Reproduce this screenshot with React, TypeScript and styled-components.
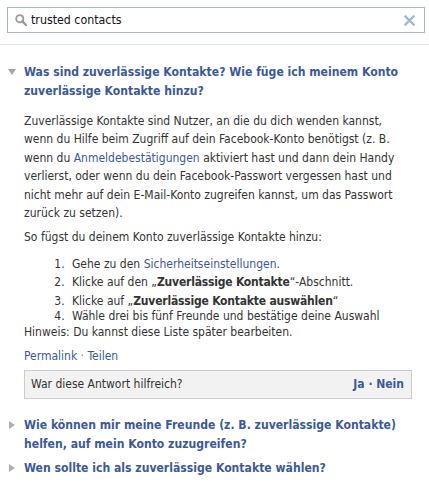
import React from "react";
import styled, { createGlobalStyle } from "styled-components";

const GlobalStyle = createGlobalStyle`
  html, body {
    margin: 0;
    padding: 0;
    background: #ffffff;
  }
  body {
    font-family: Tahoma, "DejaVu Sans Condensed", "DejaVu Sans", sans-serif;
    font-size: 12px;
    color: #333333;
  }
`;

const Page = styled.div`
  width: 429px;
`;

const SearchBar = styled.div`
  padding: 7px 4px 11px 7px;
  border-bottom: 1px solid #e5e5e5;
`;

const SearchBox = styled.div`
  box-sizing: border-box;
  height: 26px;
  border: 1px solid #a9b5cc;
  display: flex;
  align-items: center;
  padding: 0 9px 0 7px;
  gap: 4px;
`;

const SearchText = styled.span`
  flex: 1;
  color: #111111;
  font-size: 12.3px;
`;

const FaqList = styled.div`
  padding: 15px 17px 0 8px;
  display: flex;
  flex-direction: column;
`;

const Item = styled.div<{ $open?: boolean }>`
  display: flex;
  padding: 3px 0 ${(p) => (p.$open ? "14px" : "3px")};
`;

const ArrowCol = styled.div`
  width: 16px;
  flex: none;
  height: 18.5px;
  display: flex;
  align-items: center;
`;

const ArrowDown = styled.span`
  width: 0;
  height: 0;
  border-left: 4px solid transparent;
  border-right: 4px solid transparent;
  border-top: 6px solid #a6a6a6;
`;

const ArrowRight = styled.span`
  margin-left: 1px;
  width: 0;
  height: 0;
  border-top: 4px solid transparent;
  border-bottom: 4px solid transparent;
  border-left: 6px solid #b0b0b0;
`;

const Body = styled.div`
  flex: 1;
  min-width: 0;
`;

const Question = styled.a`
  display: block;
  font-weight: bold;
  font-size: 12.1px;
  line-height: 18.5px;
  color: #3b5998;
  text-decoration: none;
`;

const Answer = styled.div`
  margin-top: 12px;
  line-height: 18.4px;
`;

const Para = styled.p<{ $gap?: number }>`
  margin: ${(p) => p.$gap ?? 0}px 0 0;
`;

const Link = styled.a`
  color: #3b5998;
  text-decoration: none;
`;

const Steps = styled.ol`
  margin: 8px 0 0;
  padding-left: 44px;
`;

const Step = styled.li<{ $tight?: boolean }>`
  padding-left: 4px;
  line-height: ${(p) => (p.$tight ? "15px" : "18.4px")};
  ${(p) => (p.$tight ? "margin-top: -1px;" : "")}
`;

const Strong = styled.b`
  font-weight: bold;
  letter-spacing: -0.2px;
`;

const Note = styled.div`
  line-height: 15px;
  margin-top: 1px;
`;

const Actions = styled.div`
  margin-top: 7px;
  line-height: 18px;
  color: #777;
`;

const Feedback = styled.div`
  box-sizing: border-box;
  margin-top: 5px;
  height: 29px;
  background: #f2f2f2;
  border: 1px solid #cccccc;
  display: flex;
  align-items: center;
  justify-content: space-between;
  padding: 0 7px 0 6px;
`;

const Vote = styled.span`
  font-weight: bold;
  color: #3b5998;
`;

const SearchIcon = () => (
  <svg width="12" height="12" viewBox="0 0 12 12">
    <circle cx="4.8" cy="4.8" r="3.6" fill="none" stroke="#9a9a9a" strokeWidth="1.8" />
    <line x1="7.4" y1="7.4" x2="11" y2="11" stroke="#9a9a9a" strokeWidth="2.4" strokeLinecap="round" />
  </svg>
);

const ClearIcon = () => (
  <svg width="11" height="11" viewBox="0 0 11 11">
    <path d="M1.5 1.5 L9.5 9.5 M9.5 1.5 L1.5 9.5" stroke="#a3b4da" strokeWidth="2.4" strokeLinecap="square" />
  </svg>
);

export default function App() {
  return (
    <Page>
      <GlobalStyle />
      <SearchBar>
        <SearchBox>
          <SearchIcon />
          <SearchText>trusted contacts</SearchText>
          <ClearIcon />
        </SearchBox>
      </SearchBar>
      <FaqList>
        <Item $open>
          <ArrowCol>
            <ArrowDown />
          </ArrowCol>
          <Body>
            <Question href="#">
              Was sind zuverlässige Kontakte? Wie füge ich meinem Konto zuverlässige Kontakte hinzu?
            </Question>
            <Answer>
              <Para>
                Zuverlässige Kontakte sind Nutzer, an die du dich wenden kannst, wenn du Hilfe beim
                Zugriff auf dein Facebook-Konto benötigst (z. B. wenn du{" "}
                <Link href="#">Anmeldebestätigungen</Link> aktiviert hast und dann dein Handy
                verlierst, oder wenn du dein Facebook-Passwort vergessen hast und nicht mehr auf dein
                E-Mail-Konto zugreifen kannst, um das Passwort zurück zu setzen).
              </Para>
              <Para $gap={6}>So fügst du deinem Konto zuverlässige Kontakte hinzu:</Para>
              <Steps>
                <Step>
                  Gehe zu den <Link href="#">Sicherheitseinstellungen</Link>.
                </Step>
                <Step>
                  Klicke auf den „<Strong>Zuverlässige Kontakte</Strong>“-Abschnitt.
                </Step>
                <Step>
                  Klicke auf „<Strong>Zuverlässige Kontakte auswählen</Strong>“
                </Step>
                <Step $tight>Wähle drei bis fünf Freunde und bestätige deine Auswahl</Step>
              </Steps>
              <Note>Hinweis: Du kannst diese Liste später bearbeiten.</Note>
              <Actions>
                <Link href="#">Permalink</Link> · <Link href="#">Teilen</Link>
              </Actions>
              <Feedback>
                <span>War diese Antwort hilfreich?</span>
                <Vote>Ja · Nein</Vote>
              </Feedback>
            </Answer>
          </Body>
        </Item>
        <Item>
          <ArrowCol>
            <ArrowRight />
          </ArrowCol>
          <Body>
            <Question href="#">
              Wie können mir meine Freunde (z. B. zuverlässige Kontakte) helfen, auf mein Konto
              zuzugreifen?
            </Question>
          </Body>
        </Item>
        <Item>
          <ArrowCol>
            <ArrowRight />
          </ArrowCol>
          <Body>
            <Question href="#">Wen sollte ich als zuverlässige Kontakte wählen?</Question>
          </Body>
        </Item>
      </FaqList>
    </Page>
  );
}
